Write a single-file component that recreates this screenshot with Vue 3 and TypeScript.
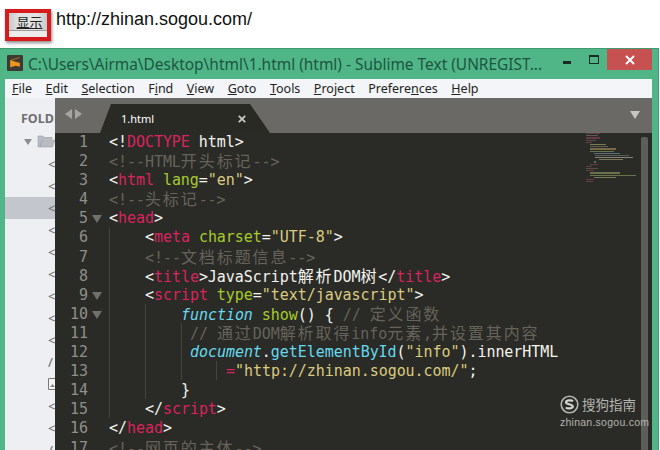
<script setup lang="ts">
type Tok = [string, string];
interface Line { indent: number; toks: Tok[]; fold?: boolean }
const c = (s: string): Tok => ['cm', s];
const lines: Line[] = [
  { indent: 0, toks: [['p', '<!'], ['k', 'DOCTYPE'], ['p', ' html>']] },
  { indent: 0, toks: [c('<!--HTML'), ['cm zh', '开头标记'], c('-->')] },
  { indent: 0, toks: [['p', '<'], ['k', 'html'], ['p', ' '], ['a', 'lang'], ['p', '='], ['s', '"en"'], ['p', '>']] },
  { indent: 0, toks: [c('<!--'), ['cm zh', '头标记'], c('-->')] },
  { indent: 0, fold: true, toks: [['p', '<'], ['k', 'head'], ['p', '>']] },
  { indent: 4, toks: [['p', '<'], ['k', 'meta'], ['p', ' '], ['a', 'charset'], ['p', '='], ['s', '"UTF-8"'], ['p', '>']] },
  { indent: 4, toks: [c('<!--'), ['cm zh', '文档标题信息'], c('-->')] },
  { indent: 4, toks: [['p', '<'], ['k', 'title'], ['p', '>JavaScript'], ['p zh', '解析'], ['p', 'DOM'], ['p zh', '树'], ['p', '</'], ['k', 'title'], ['p', '>']] },
  { indent: 4, fold: true, toks: [['p', '<'], ['k', 'script'], ['p', ' '], ['a', 'type'], ['p', '='], ['s', '"text/javascript"'], ['p', '>']] },
  { indent: 8, fold: true, toks: [['b i', 'function'], ['p', ' '], ['a', 'show'], ['p', '() { '], c('// '), ['cm zh', '定义函数']] },
  { indent: 9, toks: [c('// '), ['cm zh', '通过'], c('DOM'), ['cm zh', '解析取得'], c('info'), ['cm zh', '元素'], c(','), ['cm zh', '并设置其内容']] },
  { indent: 9, toks: [['b i', 'document'], ['p', '.'], ['b', 'getElementById'], ['p', '('], ['s', '"info"'], ['p', ').innerHTML']] },
  { indent: 13, toks: [['k', '='], ['s', '"http://zhinan.sogou.com/"'], ['p', ';']] },
  { indent: 8, toks: [['p', '}']] },
  { indent: 4, toks: [['p', '</'], ['k', 'script'], ['p', '>']] },
  { indent: 0, toks: [['p', '</'], ['k', 'head'], ['p', '>']] },
  { indent: 0, toks: [c('<!--'), ['cm zh', '网页的主体'], c('-->')] },
];
const menus: [string, string, string][] = [
  ['', 'F', 'ile'], ['', 'E', 'dit'], ['', 'S', 'election'], ['F', 'i', 'nd'], ['', 'V', 'iew'],
  ['', 'G', 'oto'], ['', 'T', 'ools'], ['', 'P', 'roject'], ['Prefere', 'n', 'ces'], ['', 'H', 'elp'],
];
const rows = ['<', '<', '<', '<', '<', '<', '<', '<', '<', '/', 'img', '<', '<', '/'];
const miniBars = [
  [0, 0, 14, '#8a4060'], [1, 0, 12, '#77776a'], [2, 0, 14, '#8a4060'], [3, 0, 10, '#66665a'], [4, 0, 6, '#8a4060'],
  [5, 4, 16, '#a9a96a'], [6, 4, 18, '#77776a'], [7, 4, 26, '#a58a5a'], [8, 4, 24, '#8a9a60'], [9, 8, 26, '#6a9aa8'],
  [10, 9, 34, '#77776a'], [11, 9, 38, '#b8b8b0'], [12, 13, 24, '#a9a070'], [13, 8, 2, '#888888'], [14, 4, 8, '#8a4060'],
  [15, 0, 6, '#8a4060'], [16, 0, 12, '#66665a'], [17, 0, 8, '#8a4060'], [18, 4, 30, '#8a9a60'], [19, 4, 46, '#8a9a60'],
  [20, 8, 22, '#a9a96a'], [21, 0, 8, '#8a4060'], [22, 0, 7, '#8a4060'],
] as [number, number, number, string][];
</script>

<template>
  <div class="page">
    <div class="top">
      <div class="btn-box">
        <button class="btn">显示</button>
      </div>
      <span class="url">http://zhinan.sogou.com/</span>
    </div>

    <div class="win">
      <div class="titlebar">
        <svg class="logo" width="16" height="16" viewBox="0 0 16 16">
          <rect width="16" height="16" rx="1" fill="#3d3a33" />
          <path d="M12.500 2.500 3.500 5.400v3.200l9 2.800V8.200L3.500 5.400M3.500 8.600V12l9-2.800V8.200" fill="#f2951f" stroke="#f2951f" stroke-width=".6" />
        </svg>
        <span class="title">C:\Users\Airma\Desktop\html\1.html (html) - Sublime Text (UNREGIST...</span>
        <div class="controls">
          <span class="ctl"><i class="min"></i></span>
          <span class="ctl narrow"><i class="max"></i></span>
          <span class="close">
            <svg width="10" height="10" viewBox="0 0 10 10"><path d="M1 1l8 8M9 1l-8 8" stroke="#fff" stroke-width="1.800" /></svg>
          </span>
        </div>
      </div>

      <div class="menubar">
        <span v-for="m in menus" :key="m[0] + m[1] + m[2]" class="menu">{{ m[0] }}<u>{{ m[1] }}</u>{{ m[2] }}</span>
      </div>

      <div class="body">
        <aside class="side">
          <div class="fold">FOLDERS</div>
          <div class="tree">
            <div class="folder-row">
              <i class="tri"></i>
              <svg class="folder" width="18" height="14" viewBox="0 0 18 14">
                <path d="M1 13V2h5l1.500 1.500H15V5H5L3 13zM3 13l2.500-7H18l-2.500 7z" fill="#b9bcc2" stroke="#9a9da3" stroke-width=".6" />
              </svg>
            </div>
            <div v-for="(r, i) in rows" :key="i" class="row" :class="{ sel: i === 2 }">
              <span v-if="r !== 'img'">{{ r }}</span>
              <svg v-else class="imgicon" width="8" height="12" viewBox="0 0 8 12">
                <path d="M7.500.5H.5v11h7" fill="#f4f4f4" stroke="#777" />
                <path d="M2 9l2.500-3L7 9z" fill="#888" />
              </svg>
            </div>
          </div>
        </aside>

        <main class="editor">
          <div class="tabs">
            <div class="nav">
              <i class="nav-l"></i>
              <i class="nav-r"></i>
            </div>
            <div class="tab">
              <span class="tab-name">1.html</span>
              <svg width="8" height="8" viewBox="0 0 8 8"><path d="M.8.8l6.400 6.400M7.200.8.800 7.200" stroke="#c9c9c4" stroke-width="1.800" /></svg>
            </div>
            <i class="tabs-menu"></i>
          </div>

          <div class="code">
            <div class="lines">
              <div v-for="(l, i) in lines" :key="i" class="line">
                <span class="num">{{ i + 1 }}</span>
                <span class="foldmark"><i v-if="l.fold"></i></span>
                <span class="src" :style="{ paddingLeft: l.indent * 9 + 'px' }"><span v-for="(t, j) in l.toks" :key="j" :class="t[0]">{{ t[1] }}</span></span>
              </div>
              <i class="guide g1"></i>
              <i class="guide g2"></i>
              <i class="guide g3"></i>
              <i class="guide g4"></i>
            </div>

            <div class="minimap">
              <i v-for="b in miniBars" :key="b[0]" class="mini" :style="{ width: b[2] + 'px', background: b[3], marginLeft: b[1] + 'px' }"></i>
            </div>
            <div class="scroll"></div>

            <div class="mark">
              <div class="mark-top">
                <svg width="19" height="19" viewBox="0 0 19 19">
                  <circle cx="9.500" cy="9.500" r="8.300" fill="none" stroke="#b5b5b0" stroke-width="1.600" />
                  <path d="M13 6.200C11.500 5 6.500 5 6 7.200c-.4 2.300 7 1.800 6.800 4.300-.2 2.300-5.300 2.400-7 1" fill="none" stroke="#d5d5d0" stroke-width="2.200" />
                </svg>
                <span class="mark-cn">搜狗指南</span>
              </div>
              <div class="mark-en">zhinan.sogou.com</div>
            </div>
          </div>
        </main>
      </div>
    </div>
  </div>
</template>

<style>
html, body { margin: 0; background: #fff; overflow: hidden; }
</style>

<style scoped>
.page { width: 660px; height: 450px; overflow: hidden; display: flex; flex-direction: column; background: #fff; }

.top { height: 48px; flex: none; display: flex; align-items: flex-start; box-sizing: border-box; padding: 9px 0 0 5px; }
.btn-box { width: 46px; height: 32px; box-sizing: border-box; border: 4px solid #d71a1c; box-shadow: 1px 2px 3px rgba(0,0,0,.45); background: #ececec; flex: none; }
.btn { display: block; width: 100%; height: 18px; padding: 0 0 0 3px; border: 0; border-bottom: 1px solid #9a9a9a; background: linear-gradient(90deg, #c9c9c9, #e2e2e2 25%, #e2e2e2 75%, #c9c9c9); font: 13px "Noto Sans CJK SC", sans-serif; line-height: 17px; color: #222; text-decoration: underline; text-decoration-thickness: 1px; text-underline-offset: 1px; }
.url { margin: 0 0 0 5px; font: 18px/20px "Liberation Sans", Arial, sans-serif; color: #111; }

.win { flex: 1; min-height: 0; background: #50b688; border-top: 1px solid #429a72; border-right: 1px solid #429a72; margin-right: 1px; padding: 0 6px 0 5px; display: flex; flex-direction: column; }
.titlebar { height: 30px; flex: none; display: flex; align-items: flex-start; color: #1d5540; }
.logo { margin: 6px 0 0 2px; flex: none; }
.title { margin: 4px 0 0 5px; font: 15.450px/22px "Noto Sans", sans-serif; white-space: nowrap; flex: none; }
.controls { margin-left: auto; display: flex; flex: none; }
.ctl { width: 26px; height: 20px; position: relative; display: block; }
.ctl.narrow { width: 18px; }
.min { position: absolute; left: 0; top: 12px; width: 8px; height: 3px; background: #1b2a25; }
.max { position: absolute; left: 0; top: 6px; width: 8px; height: 6px; border: 1px solid #1b2a25; border-top-width: 2px; }
.close { width: 45px; height: 21px; background: #c75050; display: flex; align-items: center; justify-content: center; }

.menubar { height: 19px; flex: none; background: #f3f5f8; display: flex; align-items: center; padding-left: 7px; gap: 13.500px; font: 12.500px/19px "Noto Sans", sans-serif; color: #222; }
.menu { white-space: nowrap; }

.body { flex: 1; min-height: 0; display: flex; }
.side { width: 50px; flex: none; background: #eeeff3; overflow: hidden; }
.fold { height: 33px; box-sizing: border-box; padding: 13px 0 0 16px; font: bold 12.500px/16px "Noto Sans", sans-serif; color: #6f7074; white-space: nowrap; }
.tree { width: 50px; }
.folder-row { height: 22px; position: relative; }
.tri { position: absolute; left: 19px; top: 8px; border: 4px solid transparent; border-top: 6px solid #8a8c90; border-bottom: 0; }
.folder { position: absolute; left: 32px; top: 3px; }
.row { height: 22px; box-sizing: border-box; padding-left: 43px; font: 13px/22px "Noto Sans", sans-serif; color: #666; overflow: hidden; position: relative; }
.row.sel { background: #c3c6cd; }
.imgicon { position: absolute; left: 43px; top: 5px; }

.editor { flex: 1; min-width: 0; display: flex; flex-direction: column; }
.tabs { height: 35px; flex: none; background: #6a6965; display: flex; align-items: flex-end; position: relative; }
.nav { position: absolute; left: 10px; top: 11px; display: flex; gap: 3px; }
.nav-l { border: 5px solid transparent; border-right: 7px solid #a5a5a2; border-left: 0; }
.nav-r { border: 5px solid transparent; border-left: 7px solid #a5a5a2; border-right: 0; }
.tab { margin-left: 45px; width: 170px; height: 29px; box-sizing: border-box; background: #2a2a25; clip-path: polygon(0 100%, 11px 0, 150px 0, 100% 100%); display: flex; align-items: center; padding: 0 0 0 21px; color: #fff; }
.tab-name { width: 117px; font: 11px/16px "Noto Sans", sans-serif; }
.tabs-menu { position: absolute; right: 12px; top: 13px; border: 5px solid transparent; border-top: 8px solid #c5c5c2; border-bottom: 0; }

.code { flex: 1; min-height: 0; background: #2a2a26; position: relative; overflow: hidden; }
.lines { position: relative; }
.line { height: 19.100px; display: flex; font: 15px/19px "DejaVu Sans Mono", monospace; letter-spacing: -.05px; white-space: pre; }
.num { width: 33px; text-align: right; color: #8f908a; flex: none; }
.foldmark { width: 21px; flex: none; position: relative; }
.foldmark i { position: absolute; left: 4px; top: 6px; border: 5px solid transparent; border-top: 8px solid #6f706b; border-bottom: 0; }
.src { color: #f8f8f2; }
.p { color: #f3f3ee; }
.k { color: #d9245f; }
.a { color: #a6cc2c; }
.s { color: #dacb7f; }
.b { color: #66d9ef; }
.i { font-style: italic; }
.cm { color: #66645a; }
.zh { font-family: "Noto Sans CJK SC", sans-serif; font-size: 16px; letter-spacing: 1.900px; line-height: 17px; }
.guide { position: absolute; width: 1px; background: #45453e; }
.g1 { left: 54px; top: 95px; height: 190px; }
.g2 { left: 90px; top: 171px; height: 95px; }
.g3 { left: 126px; top: 190px; height: 57px; }
.g4 { left: 161px; top: 228px; height: 19px; }

.minimap { position: absolute; left: 531px; top: 0; display: flex; flex-direction: column; gap: 1px; width: 52px; opacity: .65; }
.mini { display: block; height: 1.200px; }
.scroll { position: absolute; left: 586px; top: 4px; width: 7px; bottom: 0; background: #5d5e59; border-radius: 2px 2px 0 0; }

.mark { position: absolute; left: 505px; top: 261px; width: 82px; color: #b5b5b0; }
.mark-top { display: flex; align-items: center; gap: 3px; }
.mark-cn { font: 13.500px/20px "Noto Sans CJK SC", sans-serif; white-space: nowrap; }
.mark-en { font: 10.500px/12px "Liberation Sans", sans-serif; margin-top: 2px; letter-spacing: .25px; white-space: nowrap; }
</style>
